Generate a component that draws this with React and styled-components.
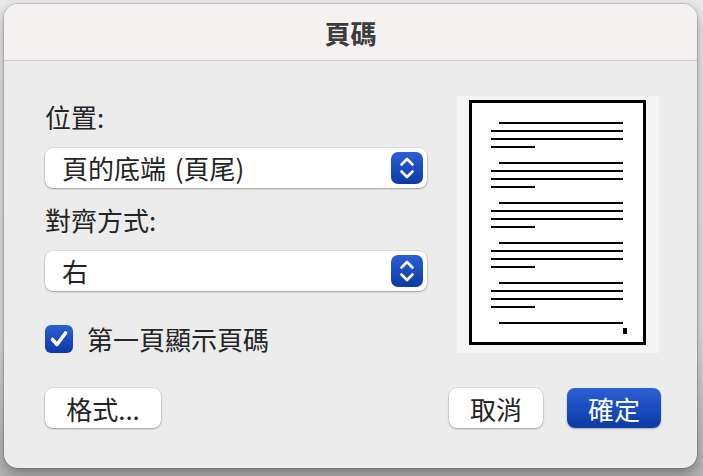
import styled, { createGlobalStyle } from "styled-components";

const GlobalStyle = createGlobalStyle`
  html, body {
    margin: 0;
    padding: 0;
    background: #e6e6e6;
  }
  body {
    font-family: "Noto Sans CJK TC", "Noto Sans", sans-serif;
    color: #242424;
  }
`;

const Stepper = () => (
  <StepperBox>
    <svg width="32" height="32" viewBox="0 0 32 32">
      <path
        d="M10.5 12.5 L16 7 L21.5 12.5 M10.5 19.5 L16 25 L21.5 19.5"
        fill="none"
        stroke="#fff"
        strokeWidth="2.6"
        strokeLinecap="round"
        strokeLinejoin="round"
      />
    </svg>
  </StepperBox>
);

const paragraphs = [0, 1, 2, 3, 4];

const PagePreview = () => (
  <PreviewPanel>
    <svg width="202" height="257" viewBox="0 0 202 257">
      <rect x="13.5" y="5.5" width="174" height="242" fill="#fff" stroke="#000" strokeWidth="3" />
      {paragraphs.map((p) => {
        const y = 26 + p * 40;
        return (
          <g key={p} fill="#000">
            <rect x="42" y={y} width="124" height="2" />
            <rect x="34" y={y + 8} width="132" height="2" />
            <rect x="34" y={y + 16} width="132" height="2" />
            <rect x="34" y={y + 24} width="44" height="2" />
          </g>
        );
      })}
      <rect x="42" y="226" width="124" height="2" fill="#000" />
      <rect x="166" y="232" width="4" height="6" fill="#000" />
    </svg>
  </PreviewPanel>
);

export default function App() {
  return (
    <>
      <GlobalStyle />
      <Screen>
        <Window>
          <TitleBar>頁碼</TitleBar>
          <Body>
            <Main>
              <Form>
                <Label>位置:</Label>
                <Select>
                  <SelectText>頁的底端 (頁尾)</SelectText>
                  <Stepper />
                </Select>
                <Label $top={17}>對齊方式:</Label>
                <Select>
                  <SelectText>右</SelectText>
                  <Stepper />
                </Select>
                <CheckRow>
                  <CheckBox>
                    <svg width="28" height="28" viewBox="0 0 28 28">
                      <path
                        d="M7.5 14.5 L12 19.5 L20.5 8"
                        fill="none"
                        stroke="#fff"
                        strokeWidth="3.6"
                        strokeLinecap="round"
                        strokeLinejoin="round"
                      />
                    </svg>
                  </CheckBox>
                  <CheckLabel>第一頁顯示頁碼</CheckLabel>
                </CheckRow>
              </Form>
              <PagePreview />
            </Main>
            <Footer>
              <Button $width={116}>格式...</Button>
              <Spacer />
              <Button>取消</Button>
              <Button $primary>確定</Button>
            </Footer>
          </Body>
        </Window>
      </Screen>
    </>
  );
}

const Screen = styled.div`
  width: 703px;
  height: 476px;
  padding: 4px 6px 0 4px;
  box-sizing: border-box;
  background: linear-gradient(#e9e9e9 0%, #e2e2e2 70%, #b4b4b4 100%);
  overflow: hidden;
`;

const Window = styled.div`
  width: 693px;
  height: 464px;
  border-radius: 14px;
  overflow: hidden;
  background: #ececec;
  display: flex;
  flex-direction: column;
  box-shadow: 0 0 0 1px rgba(0, 0, 0, 0.14), 0 6px 14px rgba(0, 0, 0, 0.35);
`;

const TitleBar = styled.div`
  height: 56px;
  flex-shrink: 0;
  background: #f6f1f1;
  border-bottom: 1px solid #c9c7c7;
  display: flex;
  align-items: center;
  justify-content: center;
  font-size: 26px;
  font-weight: 700;
  color: #3b3b3b;
`;

const Body = styled.div`
  flex: 1;
  display: flex;
  flex-direction: column;
  padding: 35px 36px 0 41px;
`;

const Main = styled.div`
  display: flex;
  justify-content: space-between;
  padding-right: 2px;
`;

const Form = styled.div`
  width: 382px;
  display: flex;
  flex-direction: column;
  padding-top: 6px;
`;

const Label = styled.div`
  font-size: 26px;
  line-height: 30px;
  margin-top: ${(p) => p.$top || 0}px;
  margin-bottom: 16px;
`;

const Select = styled.div`
  height: 40px;
  border-radius: 8px;
  background: #fff;
  display: flex;
  align-items: center;
  justify-content: space-between;
  padding: 0 4px 0 17px;
  box-shadow: 0 0 0 0.5px rgba(0, 0, 0, 0.12), 0 1px 2px rgba(0, 0, 0, 0.3);
`;

const SelectText = styled.span`
  font-size: 26px;
  line-height: 30px;
  word-spacing: 3px;
`;

const StepperBox = styled.div`
  width: 32px;
  height: 32px;
  border-radius: 7px;
  background: linear-gradient(#2c5fd4, #0c3aa6);
  display: flex;
`;

const CheckRow = styled.div`
  display: flex;
  align-items: center;
  gap: 14px;
  margin-top: 33px;
`;

const CheckBox = styled.div`
  width: 28px;
  height: 28px;
  border-radius: 6px;
  background: linear-gradient(#2c5fd4, #0c3aa6);
  display: flex;
`;

const CheckLabel = styled.span`
  font-size: 26px;
  line-height: 30px;
`;

const PreviewPanel = styled.div`
  width: 202px;
  height: 257px;
  background: #f5f5f5;
  display: flex;
`;

const Footer = styled.div`
  display: flex;
  align-items: center;
  gap: 24px;
  margin-top: 34px;
`;

const Spacer = styled.div`
  flex: 1;
`;

const Button = styled.div`
  width: ${(p) => p.$width || 94}px;
  height: 40px;
  border-radius: 8px;
  display: flex;
  align-items: center;
  justify-content: center;
  font-size: 26px;
  color: ${(p) => (p.$primary ? "#fff" : "#242424")};
  background: ${(p) => (p.$primary ? "linear-gradient(#2c5fd4, #0c3aa6)" : "#fff")};
  box-shadow: ${(p) =>
    p.$primary
      ? "0 1px 2px rgba(0, 0, 0, 0.25)"
      : "0 0 0 0.5px rgba(0, 0, 0, 0.12), 0 1px 2px rgba(0, 0, 0, 0.3)"};
`;
